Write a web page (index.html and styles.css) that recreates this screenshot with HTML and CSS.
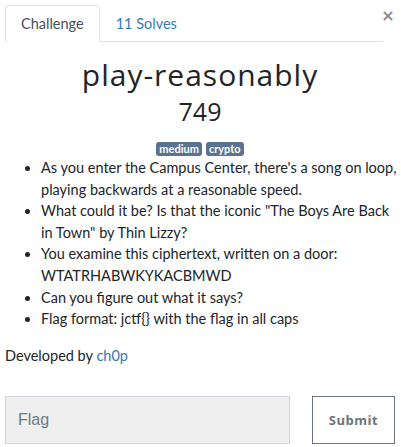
FILE: index.html
```html
<!DOCTYPE html>
<html>
<head>
<meta charset="utf-8">
<link rel="stylesheet" href="styles.css">
</head>
<body>
<div class="modal">
  <div class="head">
    <ul class="tabs">
      <li class="tab active">Challenge</li>
      <li class="tab"><a href="#">11 Solves</a></li>
    </ul>
    <button class="close" aria-label="Close">&times;</button>
  </div>
  <div class="body">
    <h2 class="title">play-reasonably</h2>
    <h3 class="value">749</h3>
    <div class="tags">
      <span class="badge">medium</span>
      <span class="badge">crypto</span>
    </div>
    <ul class="desc">
      <li>As you enter the Campus Center, there's a song on loop, playing backwards at a reasonable speed.</li>
      <li>What could it be? Is that the iconic "The Boys Are Back in Town" by Thin Lizzy?</li>
      <li>You examine this ciphertext, written on a door: WTATRHABWKYKACBMWD</li>
      <li>Can you figure out what it says?</li>
      <li>Flag format: jctf{} with the flag in all caps</li>
    </ul>
    <p class="dev">Developed by <a href="#">ch0p</a></p>
    <div class="submit-row">
      <input class="flag" type="text" placeholder="Flag">
      <button class="submit">Submit</button>
    </div>
  </div>
</div>
</body>
</html>
```
FILE: styles.css
```css
html, body {
  margin: 0;
  padding: 0;
  background: #fff;
}
body {
  font-family: Lato, "Liberation Sans", sans-serif;
  font-size: 14.5px;
  color: #212529;
}
.modal {
  padding: 5px 0 0 5px;
}
.head {
  display: flex;
  align-items: flex-start;
  padding-right: 8px;
}
.tabs {
  flex: 1;
  display: flex;
  list-style: none;
  margin: 0;
  padding: 0;
  border-bottom: 1px solid #dee2e6;
}
.tab {
  padding: 8px 15px;
  line-height: 19px;
  font-size: 14.5px;
  border: 1px solid transparent;
  border-radius: 4px 4px 0 0;
  margin-bottom: -1px;
}
.tab.active {
  color: #495057;
  border-color: #dee2e6 #dee2e6 #fff;
}
.tab a {
  color: #337ab7;
  text-decoration: none;
}
.close {
  width: 10px;
  background: none;
  border: 0;
  padding: 0;
  margin-top: 3px;
  font-size: 16px;
  line-height: 16px;
  font-weight: 700;
  color: #8a8a8a;
  font-family: "DejaVu Sans", sans-serif;
  display: flex;
  justify-content: center;
  overflow: visible;
}
.body {
  padding-top: 14px;
  padding-right: 6px;
}
.title {
  margin: 0;
  text-align: center;
  font-family: "Open Sans", sans-serif;
  font-weight: 400;
  font-size: 30px;
  line-height: 38px;
  letter-spacing: 1px;
}
.value {
  margin: 0;
  text-align: center;
  font-family: "Open Sans", sans-serif;
  font-weight: 400;
  font-size: 25px;
  line-height: 34px;
}
.tags {
  display: flex;
  justify-content: center;
  gap: 4px;
  margin-top: 14px;
}
.badge {
  background: #5b7290;
  color: #fff;
  font-size: 11px;
  font-weight: 700;
  line-height: 14px;
  padding: 0 3px;
  border-radius: 3px;
}
.desc {
  margin: 1px -6px 0 0;
  padding-left: 36px;
  font-size: 14.5px;
  line-height: 21.6px;
}
.dev {
  margin: 16px 0 0;
  font-size: 14.5px;
  line-height: 20px;
}
.dev a {
  color: #337ab7;
  text-decoration: none;
}
.submit-row {
  display: flex;
  gap: 22px;
  margin-top: 30px;
}
.flag {
  flex: 1;
  height: 48px;
  box-sizing: border-box;
  border: 1px solid #ced4da;
  background: #efefef;
  padding: 0 12px;
  font-family: "Liberation Sans", sans-serif;
  font-size: 16px;
  color: #495057;
}
.flag::placeholder {
  color: #6c7c8c;
}
.submit {
  width: 83px;
  height: 48px;
  box-sizing: border-box;
  background: #fff;
  border: 1px solid #6c757d;
  font-family: "Open Sans", sans-serif;
  font-weight: 700;
  font-size: 13px;
  color: #6c757d;
  letter-spacing: 0.5px;
}
```
